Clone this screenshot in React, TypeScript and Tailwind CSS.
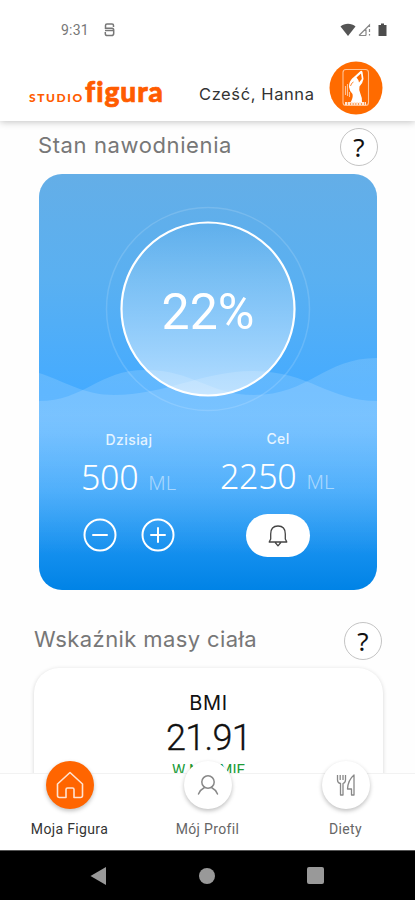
import type { ReactNode } from "react";

const StatusBar = () => (
  <div className="flex h-[60px] items-center justify-between pl-[61px] pr-[28px]">
    <div className="flex items-center gap-[15px] text-[#777]">
      <span className="w-[28px] whitespace-nowrap font-['Roboto',sans-serif] text-[14px] tracking-[0.2px]">9:31</span>
      <svg width="11" height="14" viewBox="0 0 11 14" fill="none" stroke="#777" strokeWidth="1.5">
        <path d="M9.5 4V2.5Q9.5 1 8 1H3Q1.5 1 1.5 2.5V5.2H8Q9.7 5.2 9.7 7v3.2Q9.7 12.6 7.5 12.6H3.5Q1.3 12.6 1.3 10.5V9M1 7.6h9" />
      </svg>
    </div>
    <svg width="47" height="14" viewBox="0 0 47 14">
      <path d="M.5 3.5C4.5-.2 11.5-.2 15.500 3.5L8 13z" fill="#555" />
      <path d="M19 12.5 29.500 2v2M19 12.5h7M29.500 6v3M29.500 11v1.5M26 6.5v6" fill="none" stroke="#888" strokeWidth="1.2" />
      <path d="M38.500 2H41V.5h3V2h2.500v11h-8z" fill="#4d4d4d" />
    </svg>
  </div>
);

const Avatar = () => (
  <svg className="shrink-0" width="54" height="54" viewBox="0 0 54 54">
    <circle cx="27" cy="27" r="26.5" fill="#ff6b00" />
    <rect x="14" y="8.500" width="25.500" height="36" rx="3" fill="none" stroke="#ffc294" strokeWidth="1.1" />
    <path
      d="M20 26C20 21 22 18 26 15L31.500 10Q33 9.300 33.500 11L34.500 18Q33.500 23 30.500 25.500Q29.500 29 31.500 33Q33.500 37 33 42H21Q24.500 37 23.500 33Q20.500 30 20 26z"
      fill="#fff"
    />
    <path d="m27.500 16.500 4.500-4 .8 5.500-2.800 3.500q-.4-3-2.500-5z" fill="#ff6b00" />
    <path d="M21.500 25q1-3.500 3-4" fill="none" stroke="#ff6b00" strokeWidth=".8" />
    <path d="M18.500 23v12M16.500 25v9M20.500 31v5" stroke="#ffc294" strokeWidth="1.100" />
    <path d="M16 42.500h21" stroke="#ffe6d4" strokeWidth="3.2" strokeDasharray="2.200 .6" />
  </svg>
);

const Header = () => (
  <header className="relative z-10 h-[121px] shrink-0 bg-white shadow-[0_1px_7px_rgba(0,0,0,0.24)]">
    <StatusBar />
    <div className="flex h-[56px] items-center pl-[29px]">
      <div className="flex w-[170px] items-baseline whitespace-nowrap pt-[5px] font-['Lato',sans-serif] text-[#ff5c00]">
        <span className="w-[56px] text-[12px] font-black tracking-[1.6px]">STUDIO</span>
        <span className="text-[28px] font-black leading-[32px] tracking-[1px] [-webkit-text-stroke:0.7px_#ff5c00]">figura</span>
      </div>
      <span className="w-[130px] whitespace-nowrap pt-[12px] font-['Inter',sans-serif] text-[16.500px] leading-6 tracking-[0.6px] text-[#333]">
        Cześć, Hanna
      </span>
      <Avatar />
    </div>
  </header>
);

const Help = () => (
  <button className="flex size-[38px] shrink-0 items-center justify-center rounded-full border border-[#c4c4c4] bg-white font-['Noto_Sans',sans-serif] text-[26px] leading-none text-[#111]">
    ?
  </button>
);

const Waves = () => (
  <svg className="absolute inset-0" width="338" height="416" viewBox="0 0 338 416">
    <defs>
      <linearGradient id="wave" x1="0" y1="184" x2="0" y2="416" gradientUnits="userSpaceOnUse">
        <stop offset="0" stopColor="#fff" stopOpacity=".14" />
        <stop offset=".25" stopColor="#fff" stopOpacity=".15" />
        <stop offset=".85" stopColor="#fff" stopOpacity="0" />
      </linearGradient>
      <linearGradient id="glass" x1="0" y1="0" x2="0" y2="1">
        <stop offset="0" stopColor="#fff" stopOpacity="0" />
        <stop offset="1" stopColor="#fff" stopOpacity=".6" />
      </linearGradient>
    </defs>
    <path d="M0 199C25 207 45 221 75 221C125 221 165 197 214 197C270 197 290 227 338 227V416H0z" fill="url(#wave)" />
    <path d="M0 227C45 227 60 196 106 196C155 196 170 221 215 221C270 221 285 184 338 184V416H0z" fill="url(#wave)" />
    <circle cx="169" cy="135" r="101.5" fill="none" stroke="#fff" strokeOpacity=".14" strokeWidth="1.5" />
    <circle cx="169" cy="135" r="86.5" fill="url(#glass)" stroke="#fff" strokeWidth="2.200" />
  </svg>
);

const HydrationCard = () => (
  <section className="relative h-[416px] overflow-hidden rounded-[23px] bg-[linear-gradient(#64aee7_0%,#5ab0f1_25%,#45abff_52%,#47acff_62%,#35a3fb_76%,#0083e6_100%)] text-white">
    <Waves />
    <div className="relative flex h-[255px] items-center justify-center pt-[21px]">
      <span className="font-['Roboto',sans-serif] text-[50px] leading-none">22%</span>
    </div>
    <div className="relative flex">
      <div className="w-[181px] pl-[42px]">
        <p className="w-[96px] text-center font-['Inter',sans-serif] text-[14px] font-medium leading-[22px] tracking-[0.4px] text-[#e5f4ff]">Dzisiaj</p>
        <p className="mt-px flex items-baseline gap-[10px] whitespace-nowrap font-['Noto_Sans',sans-serif] font-light">
          <span className="text-[34px] leading-[50px] tracking-[-0.3px]">500</span>
          <span className="text-[20px] text-white/50">ML</span>
        </p>
        <div className="mt-[16px] flex gap-[24px] pl-[2px]">
          <svg width="34" height="34" viewBox="0 0 34 34" fill="none" stroke="#fff" strokeWidth="2">
            <circle cx="17" cy="17" r="15.5" />
            <path d="M10 17h14" strokeLinecap="round" />
          </svg>
          <svg width="34" height="34" viewBox="0 0 34 34" fill="none" stroke="#fff" strokeWidth="2">
            <circle cx="17" cy="17" r="15.5" />
            <path d="M10 17h14M17 10v14" strokeLinecap="round" />
          </svg>
        </div>
      </div>
      <div className="-mt-px">
        <p className="w-[116px] text-center font-['Inter',sans-serif] text-[14px] font-medium leading-[22px] tracking-[0.4px] text-[#e5f4ff]">Cel</p>
        <p className="mt-px flex items-baseline gap-[10px] whitespace-nowrap font-['Noto_Sans',sans-serif] font-light">
          <span className="text-[34px] leading-[50px] tracking-[-0.3px]">2250</span>
          <span className="text-[20px] text-white/50">ML</span>
        </p>
        <button className="ml-[26px] mt-[13px] flex h-[43px] w-[64px] items-center justify-center rounded-full bg-white">
          <svg width="20" height="24" viewBox="0 0 20 24" fill="none" stroke="#444" strokeWidth="1.3" strokeLinejoin="round">
            <path d="M2.700 15V10C2.700 5 5.500 2 10 2s7.300 3 7.300 8v5l1.500 3H1.200zM7.200 18.500 10 21.800l2.800-3.300" />
          </svg>
        </button>
      </div>
    </div>
  </section>
);

const BmiCard = () => (
  <section className="flex h-[160px] flex-col items-center rounded-[25px] bg-white pt-[21px] font-['Roboto',sans-serif] text-[#111] shadow-[0_1px_4px_rgba(0,0,0,0.17)]">
    <h3 className="font-['Inter',sans-serif] text-[20px] leading-[28px] tracking-[0.6px]">BMI</h3>
    <p className="text-[36px] font-light leading-[42px] tracking-[-0.7px] [-webkit-text-stroke:0.3px_#111]">21.91</p>
    <p className="pt-[2px] text-[15px] leading-[18px] text-[#209b38]">W NORMIE</p>
  </section>
);

const NavItem = ({ label, active, children }: { label: string; active?: boolean; children: ReactNode }) => (
  <div className="flex w-[138px] flex-col items-center">
    <div
      className={
        active
          ? "-mt-[13px] flex size-[48px] items-center justify-center rounded-full bg-[#ff6500] shadow-[0_2px_4px_rgba(0,0,0,0.25)]"
          : "-mt-[13px] flex size-[48px] items-center justify-center rounded-full bg-white shadow-[0_2px_4px_rgba(0,0,0,0.25)]"
      }
    >
      {children}
    </div>
    <span
      className={
        active
          ? "mt-[10px] text-[14px] leading-5 tracking-[0.35px] text-[#333]"
          : "mt-[10px] text-[14px] leading-5 tracking-[0.35px] text-[#666]"
      }
    >
      {label}
    </span>
  </div>
);

const BottomNav = () => (
  <nav className="relative z-10 flex h-[77px] shrink-0 justify-center border-t border-[#f2f2f2] bg-white font-['Roboto',sans-serif]">
    <NavItem label="Moja Figura" active>
      <svg width="28" height="28" viewBox="0 0 28 28" fill="none" stroke="#ffe3d1" strokeWidth="1.6" strokeLinejoin="round">
        <path d="M14 1.5 1.500 13v11.500q0 2 2 2H10v-8q0-1.500 1.500-1.500h5q1.500 0 1.500 1.500v8h6.500q2 0 2-2V13z" />
      </svg>
    </NavItem>
    <NavItem label="Mój Profil">
      <svg width="22" height="22" viewBox="0 0 22 22" fill="none" stroke="#888" strokeWidth="1.5" strokeLinecap="round">
        <circle cx="11" cy="8" r="6.2" />
        <path d="M1.500 20q2-4.500 6-6.500M20.500 20q-2-4.500-6-6.500" />
      </svg>
    </NavItem>
    <NavItem label="Diety">
      <svg width="20" height="22" viewBox="0 0 20 22" fill="none" stroke="#888" strokeWidth="1.3" strokeLinejoin="round">
        <path d="M1.500 1v5q0 3 3 3.500V21H7V9.500q2.500-1 2.500-3.500V1M4.200 1v5M7 1v5M18 21h-2.500v-6h-4Q12 6 18 1z" />
      </svg>
    </NavItem>
  </nav>
);

const SystemNav = () => (
  <div className="flex h-[50px] shrink-0 items-center justify-between border-t border-[#555] bg-black pl-[90px] pr-[91px]">
    <svg width="17" height="18" viewBox="0 0 17 18" fill="#999"><path d="M16 0v18L.5 9z" /></svg>
    <span className="size-[16px] rounded-full bg-[#999]" />
    <span className="size-[17px] rounded-[2px] bg-[#999]" />
  </div>
);

const App = () => {
  return (
    <div className="flex h-[900px] w-[415px] flex-col overflow-hidden bg-white">
      <Header />
      <main className="h-[652px] shrink-0 overflow-hidden bg-[#fefefe]">
        <div className="flex h-[53px] items-start justify-between pl-[38px] pr-[37px] pt-[7px]">
          <h2 className="pt-[3px] font-['Inter',sans-serif] text-[22px] leading-[28px] tracking-[0.6px] text-[#777]">Stan nawodnienia</h2>
          <Help />
        </div>
        <div className="pl-[39px] pr-[38px]">
          <HydrationCard />
        </div>
        <div className="flex h-[78px] items-start justify-between pl-[34px] pr-[33px] pt-[32px]">
          <h2 className="pt-[3px] font-['Inter',sans-serif] text-[22px] leading-[28px] tracking-[0.4px] text-[#777]">Wskaźnik masy ciała</h2>
          <Help />
        </div>
        <div className="pl-[34px] pr-[32px]">
          <BmiCard />
        </div>
      </main>
      <BottomNav />
      <SystemNav />
    </div>
  );
};

export default App;
